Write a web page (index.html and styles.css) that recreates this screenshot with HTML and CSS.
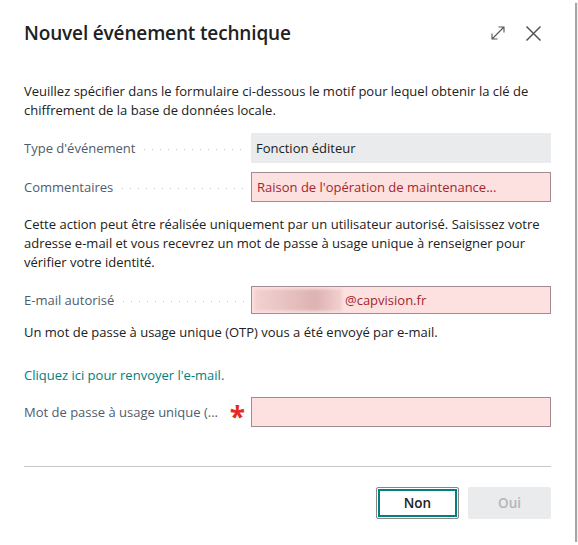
FILE: index.html
```html
<!DOCTYPE html>
<html lang="fr">
<head>
  <meta charset="UTF-8" />
  <meta name="viewport" content="width=device-width, initial-scale=1.0"/>
  <title>Nouvel événement technique</title>
  <link rel="stylesheet" href="styles.css">
</head>
<body>
  <div class="dialog">
    <div class="header">
      <h1>Nouvel événement technique</h1>
      <div class="tools">
        <svg class="icon-expand" width="16" height="16" viewBox="0 0 16 16">
          <path d="M2 14 L14 2 M8.5 2 H14 V7.5 M2 8.5 V14 H7.5" fill="none" stroke="#555" stroke-width="1.1"/>
        </svg>
        <svg class="icon-close" width="17" height="17" viewBox="0 0 17 17">
          <path d="M1.5 1.5 L15.5 15.5 M15.5 1.5 L1.5 15.5" fill="none" stroke="#555" stroke-width="1.5"/>
        </svg>
      </div>
    </div>

    <p class="intro">Veuillez spécifier dans le formulaire ci-dessous le motif pour lequel obtenir la clé de chiffrement de la base de données locale.</p>

    <div class="field">
      <div class="label"><span>Type d'événement</span><span class="dots"></span></div>
      <div class="value readonly">Fonction éditeur</div>
    </div>
    <div class="field">
      <div class="label"><span>Commentaires</span><span class="dots"></span></div>
      <div class="value error">Raison de l'opération de maintenance...</div>
    </div>

    <p class="notice">Cette action peut être réalisée uniquement par un utilisateur autorisé. Saisissez votre adresse e-mail et vous recevrez un mot de passe à usage unique à renseigner pour vérifier votre identité.</p>

    <div class="field email">
      <div class="label"><span>E-mail autorisé</span><span class="dots"></span></div>
      <div class="value error"><span class="blur"></span>@capvision.fr</div>
    </div>

    <p class="sent">Un mot de passe à usage unique (OTP) vous a été envoyé par e-mail.</p>

    <a class="resend" href="#">Cliquez ici pour renvoyer l'e-mail.</a>

    <div class="field otp">
      <div class="label"><span>Mot de passe à usage unique (...</span><span class="required">*</span></div>
      <div class="value error"></div>
    </div>

    <div class="footer">
      <button class="btn primary">Non</button>
      <button class="btn disabled">Oui</button>
    </div>
  </div>
</body>
</html>
```

FILE: styles.css
```css
body {
  margin: 0;
  background: #fff;
  font-family: 'Open Sans', 'Noto Sans', sans-serif;
  font-size: 13px;
  color: #212121;
}
.dialog {
  width: 575px;
  height: 542px;
  box-sizing: border-box;
  padding: 20px 24px 0 24px;
  background: #fff;
  box-shadow: 2px 3px 1px rgba(0, 0, 0, 0.35);
}
.header {
  display: flex;
  align-items: center;
  justify-content: space-between;
  height: 26px;
}
h1 {
  margin: 0;
  font-size: 19px;
  font-weight: 600;
  line-height: 26px;
  letter-spacing: -0.15px;
  color: #212121;
}
.tools {
  display: flex;
  align-items: center;
  gap: 19px;
  margin-right: 9px;
}
.intro {
  margin: 36px 0 13px;
  line-height: 19px;
}
.field {
  display: flex;
  align-items: center;
  height: 30px;
  margin-bottom: 9px;
}
.label {
  width: 227px;
  display: flex;
  align-items: center;
  color: #505c6d;
  flex-shrink: 0;
}
.dots {
  flex: 1;
  height: 1px;
  margin: 3px 6px 0 9px;
  background-image: linear-gradient(to right, #bfc3c8 1px, transparent 1px);
  background-size: 8px 1px;
  background-repeat: repeat-x;
}
.value {
  flex: 1;
  height: 30px;
  box-sizing: border-box;
  display: flex;
  align-items: center;
  padding: 0 5px;
}
.readonly {
  background: #eaebec;
}
.error {
  background: #fde0e0;
  border: 1px solid #a28b91;
  color: #a4262c;
}
.email,
.email .value {
  height: 28px;
}
.blur {
  width: 88px;
  height: 22px;
  margin: 0 3px 0 -3px;
  background: linear-gradient(to right, #f3d2d2, #e6c0c0 40%, #dcb2b2 70%, #f3d0d0);
  filter: blur(1.5px);
}
.notice {
  margin: 13px 0 14px;
  line-height: 19px;
}
.sent {
  margin: 1px 0 24px;
  line-height: 19px;
}
.resend {
  display: block;
  color: #00807e;
  text-decoration: none;
  line-height: 19px;
  margin-bottom: 12px;
}
.otp .label {
  justify-content: space-between;
}
.required {
  color: #e52b22;
  font-size: 28px;
  font-weight: 700;
  line-height: 20px;
  margin: 8px 6px 0 0;
}
.footer {
  display: flex;
  justify-content: flex-end;
  gap: 9px;
  margin-top: 39px;
  padding-top: 20px;
  border-top: 1px solid #c8c8c8;
}
.btn {
  width: 83px;
  height: 32px;
  font-family: inherit;
  font-size: 13.5px;
  font-weight: 600;
  border-radius: 2px;
}
.primary {
  background: #fff;
  color: #212121;
  border: 1px solid #8a8886;
  box-shadow: inset 0 0 0 1px #fff, inset 0 0 0 3px #00807e;
}
.disabled {
  background: #eaebec;
  color: #b3b6ba;
  border: none;
}
```
